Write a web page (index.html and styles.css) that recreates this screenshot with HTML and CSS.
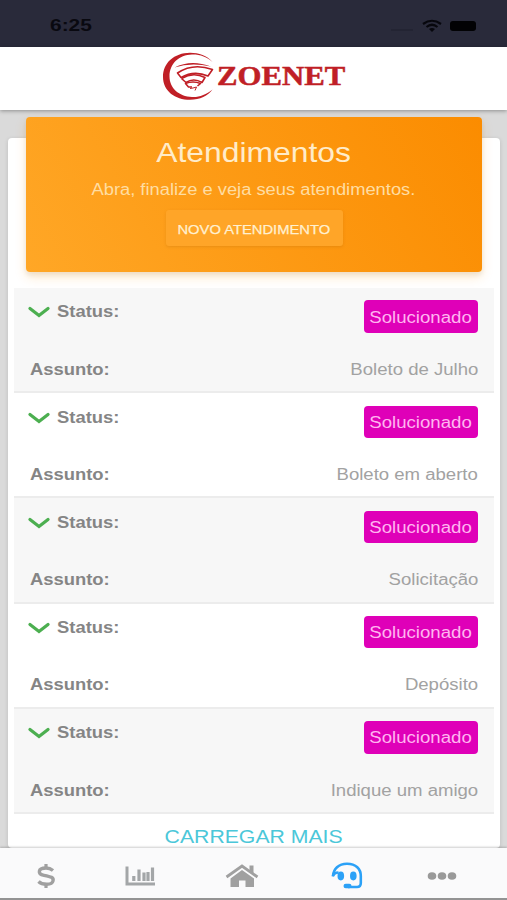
FILE: index.html
```html
<!DOCTYPE html>
<html lang="pt-BR">
<head>
<meta charset="utf-8">
<title>Zoenet</title>
<link rel="stylesheet" href="styles.css">
</head>
<body>
<div class="app">
  <div class="statusbar">
    <span class="clock">6:25</span>
    <div class="indicators">
      <span class="signal"></span>
      <svg class="wifi" width="20" height="14" viewBox="0 0 20 14" fill="none" stroke="#07070d" stroke-width="2.2"><path d="M1 5Q10-1.500 19 5M4.500 8Q10 3.500 15.500 8"/><path d="M7 10Q10 8 13 10L10 13Z" fill="#07070d" stroke="none"/></svg>
      <span class="battery"></span>
    </div>
  </div>
  <header class="header">
    <svg class="mark" width="54" height="50" viewBox="0 0 54 50">
      <path fill="#c01f26" d="M50.500 10C45 3.500 37 .8 28 .8C12 1 1 11 1 25C1 39 13 47.800 28 47.800C38 47.800 46 44 50.500 37.500C44 42.500 37 45.500 30 45C17 44.500 7.500 36 7.500 24.500C7.500 11.500 17 3 30 2.500C38 2.300 45 5 50.500 10Z"/>
      <path fill="#c01f26" d="M12.500 15.500Q29 7 49 14.500Q29 10 12.500 15.500Z"/>
      <g fill="none" stroke="#c01f26" stroke-width="1.600" stroke-linejoin="round">
        <path d="M15.500 21Q31 10.500 50.500 17.500L46 24Q32 18 19 25.500Z"/>
        <path d="M19.500 26.500Q31 19.500 43 25.500L40 30.500Q31.500 25.500 24 30.500L19.500 26.500"/>
        <path d="M35.500 34L38.500 31.500Q31 28.500 23.500 31.500L26.500 35H30"/>
        <path d="M28 36.500L31 36L34.500 35L33 38.500" stroke-width="1"/>
      </g>
    </svg>
    <span class="brand">ZOENET</span>
  </header>
  <main class="content">
    <section class="card">
      <div class="hero">
        <h1 class="title"><span>Atendimentos</span></h1>
        <p class="subtitle"><span>Abra, finalize e veja seus atendimentos.</span></p>
        <button class="new"><span>NOVO ATENDIMENTO</span></button>
      </div>
      <div class="list">
        <article class="row">
          <div class="line top"><svg class="chev" width="22" height="13" viewBox="0 0 22 13"><path d="M2 2.500L11 9.500L20 2.500"/></svg><b>Status:</b><span class="badge"><span>Solucionado</span></span></div>
          <div class="line"><b>Assunto:</b><span class="value">Boleto de Julho</span></div>
        </article>
        <article class="row">
          <div class="line top"><svg class="chev" width="22" height="13" viewBox="0 0 22 13"><path d="M2 2.500L11 9.500L20 2.500"/></svg><b>Status:</b><span class="badge"><span>Solucionado</span></span></div>
          <div class="line"><b>Assunto:</b><span class="value">Boleto em aberto</span></div>
        </article>
        <article class="row">
          <div class="line top"><svg class="chev" width="22" height="13" viewBox="0 0 22 13"><path d="M2 2.500L11 9.500L20 2.500"/></svg><b>Status:</b><span class="badge"><span>Solucionado</span></span></div>
          <div class="line"><b>Assunto:</b><span class="value">Solicitação</span></div>
        </article>
        <article class="row">
          <div class="line top"><svg class="chev" width="22" height="13" viewBox="0 0 22 13"><path d="M2 2.500L11 9.500L20 2.500"/></svg><b>Status:</b><span class="badge"><span>Solucionado</span></span></div>
          <div class="line"><b>Assunto:</b><span class="value">Depósito</span></div>
        </article>
        <article class="row">
          <div class="line top"><svg class="chev" width="22" height="13" viewBox="0 0 22 13"><path d="M2 2.500L11 9.500L20 2.500"/></svg><b>Status:</b><span class="badge"><span>Solucionado</span></span></div>
          <div class="line"><b>Assunto:</b><span class="value">Indique um amigo</span></div>
        </article>
      </div>
      <a class="more"><span>CARREGAR MAIS</span></a>
    </section>
  </main>
  <nav class="nav">
    <a><svg width="20" height="26" viewBox="0 0 20 26" fill="none" stroke="#a0a0a0" stroke-width="3.400"><path d="M17 7.500Q14 5 10 5C1.500 5 1.500 11 8 12.300C15 13.700 18 14.500 17 18C16 22.500 6 22 2.500 18.500"/><path d="M10 1V5M10 21V25" stroke-width="3.200"/></svg></a>
    <a><svg width="32" height="22" viewBox="0 0 32 22" fill="none" stroke="#a3a6a8"><path d="M3 1.500V19H31" stroke-width="3"/><path d="M9.800 11V16M15 4.500V16M20 7.500V16M24 7V16M28.500 2.500V16" stroke-width="3.200"/></svg></a>
    <a><svg width="34" height="24" viewBox="0 0 34 24"><path d="M1.500 13L17 2L32.500 13" fill="none" stroke="#a0a0a0" stroke-width="2.800"/><path fill="#a0a0a0" d="M24.500 1.500H28.500V10L24.500 6.500ZM17 6L29 14.500V23H20.500V16.500H14V23H5.500V14.500Z"/></svg></a>
    <a><svg width="32" height="27" viewBox="0 0 32 27" fill="none" stroke="#2ba1f7"><path d="M2 14C2.500 7 7.500 1.800 16 1.800C25 1.800 29.800 7 29.800 14V21Q29.800 25 26 25H17" stroke-width="2.600"/><path d="M1.800 14.500Q3 10.500 7.500 10.500" stroke-width="2.600"/><ellipse cx="9.800" cy="14" rx="3.300" ry="4.400" fill="#2ba1f7" stroke="none"/><ellipse cx="22.300" cy="14" rx="3.300" ry="4.400" fill="#2ba1f7" stroke="none"/><rect x="12.500" y="21.800" width="8" height="4.500" rx="2.200" fill="#2ba1f7" stroke="none"/></svg></a>
    <a><svg width="30" height="10" viewBox="0 0 30 10" fill="#999"><ellipse cx="5" cy="5" rx="4.300" ry="3.800"/><ellipse cx="15" cy="5" rx="4.300" ry="3.800"/><ellipse cx="25" cy="5" rx="4.300" ry="3.800"/></svg></a>
  </nav>
</div>
</body>
</html>
```
FILE: styles.css
```css
* { box-sizing: border-box; }
body { margin: 0; font-family: "Liberation Sans", Arial, sans-serif; }
.app { height: 900px; display: flex; flex-direction: column; overflow: hidden; background: #dadada; }
.statusbar { flex: none; height: 47px; padding: 4px 31px 0 50px; display: flex; align-items: center; justify-content: space-between; background: #292a3a; }
.clock { font: bold 17px/20px "Liberation Sans", sans-serif; color: #090910; transform: scaleX(1.23); transform-origin: left; }
.indicators { display: flex; align-items: center; gap: 9px; }
.signal { width: 22px; height: 2px; margin-top: 8px; background: #232433; }
.battery { width: 26px; height: 10px; border-radius: 3px; background: #020204; }
.wifi { margin-right: -1px; }
.header { flex: none; position: relative; z-index: 1; height: 63px; padding: 5px 0 0 162px; display: flex; align-items: flex-start; background: #fff; box-shadow: 0 1px 4px rgba(0,0,0,.35); }
.brand { margin: 8px 0 0 1px; font: bold 27px/32px "Liberation Serif", serif; color: #c01f26; -webkit-text-stroke: .5px #c01f26; transform: scaleX(1.14); transform-origin: left; }
.content { flex: 1; min-height: 0; overflow: hidden; padding: 28px 7px 0 8px; }
.card { height: 710px; padding: 0 6px; overflow: visible; border-radius: 4px; background: #fff; box-shadow: 0 1px 4px rgba(0,0,0,.14); }
.hero { position: relative; top: -21px; height: 155px; margin: 0 12px; padding-top: 18px; display: flex; flex-direction: column; align-items: center; border-radius: 4px; background: linear-gradient(60deg, #ffa726, #fb8c00); box-shadow: 0 5px 12px rgba(255,152,0,.2), 0 3px 5px rgba(0,0,0,.08); color: #ffecc9; }
.title { margin: 0; font-size: 28px; line-height: 36px; font-weight: 400; }
.title span, .subtitle span, .new span, .more span, .badge span { display: inline-block; transform: scaleX(1.137); }
.subtitle { margin: 8px 0 0; font-size: 16px; line-height: 22px; color: #ffdda2; }
.subtitle span { transform: translateX(-1px) scaleX(1.145); }
.new { width: 177px; height: 36px; margin-top: 9px; padding: 3px 0 0; border: 0; border-radius: 3px; background: #ffa528; box-shadow: 0 1px 3px rgba(160,90,0,.22); color: #fff0d0; font: 13px/18px "Liberation Sans", sans-serif; white-space: nowrap; -webkit-text-stroke: .25px #fff0d0; }
.new span { transform: translateX(-.5px) scaleX(1.135); }
.list { margin-top: -5px; }
.row { height: 105.2px; padding: 12.4px 16px 0; border-bottom: 2px solid #ececec; background: #fff; }
.row:nth-child(odd) { background: #f7f7f7; }
.line { height: 20px; display: flex; align-items: center; font-size: 16px; line-height: 20px; }
.line.top { height: 33px; margin-bottom: 26.5px; align-items: flex-start; }
.line b { color: #858585; transform: scaleX(1.15); transform-origin: left; }
.line.top b { margin-top: 2px; }
.chev { flex: none; margin: 6px 6.5px 0 -2px; fill: none; stroke: #4caf50; stroke-width: 3.2; stroke-linecap: round; }
.value { margin-left: auto; color: #a2a2a2; transform: scaleX(1.16); transform-origin: right; }
.badge { width: 114px; height: 32.5px; margin-left: auto; padding-top: 2px; display: flex; align-items: center; justify-content: center; border-radius: 4px; background: #df00b8; color: #ffb5f0; }
.badge span { transform: translateX(-.5px) scaleX(1.165); }
.more { display: block; margin-top: 12px; text-align: center; font-size: 18.5px; line-height: 22px; color: #4bc7d9; }
.more span { transform: scaleX(1.147); }
.nav { flex: none; position: relative; height: 52px; padding: 5px 17px 0 0; display: grid; grid-template-columns: 91px 97px 108px 101px 90px; align-items: center; background: #fafafb; border-bottom: 2px solid #939393; box-shadow: 0 -1px 2px rgba(0,0,0,.2); }
.nav a { display: flex; justify-content: center; }
```
